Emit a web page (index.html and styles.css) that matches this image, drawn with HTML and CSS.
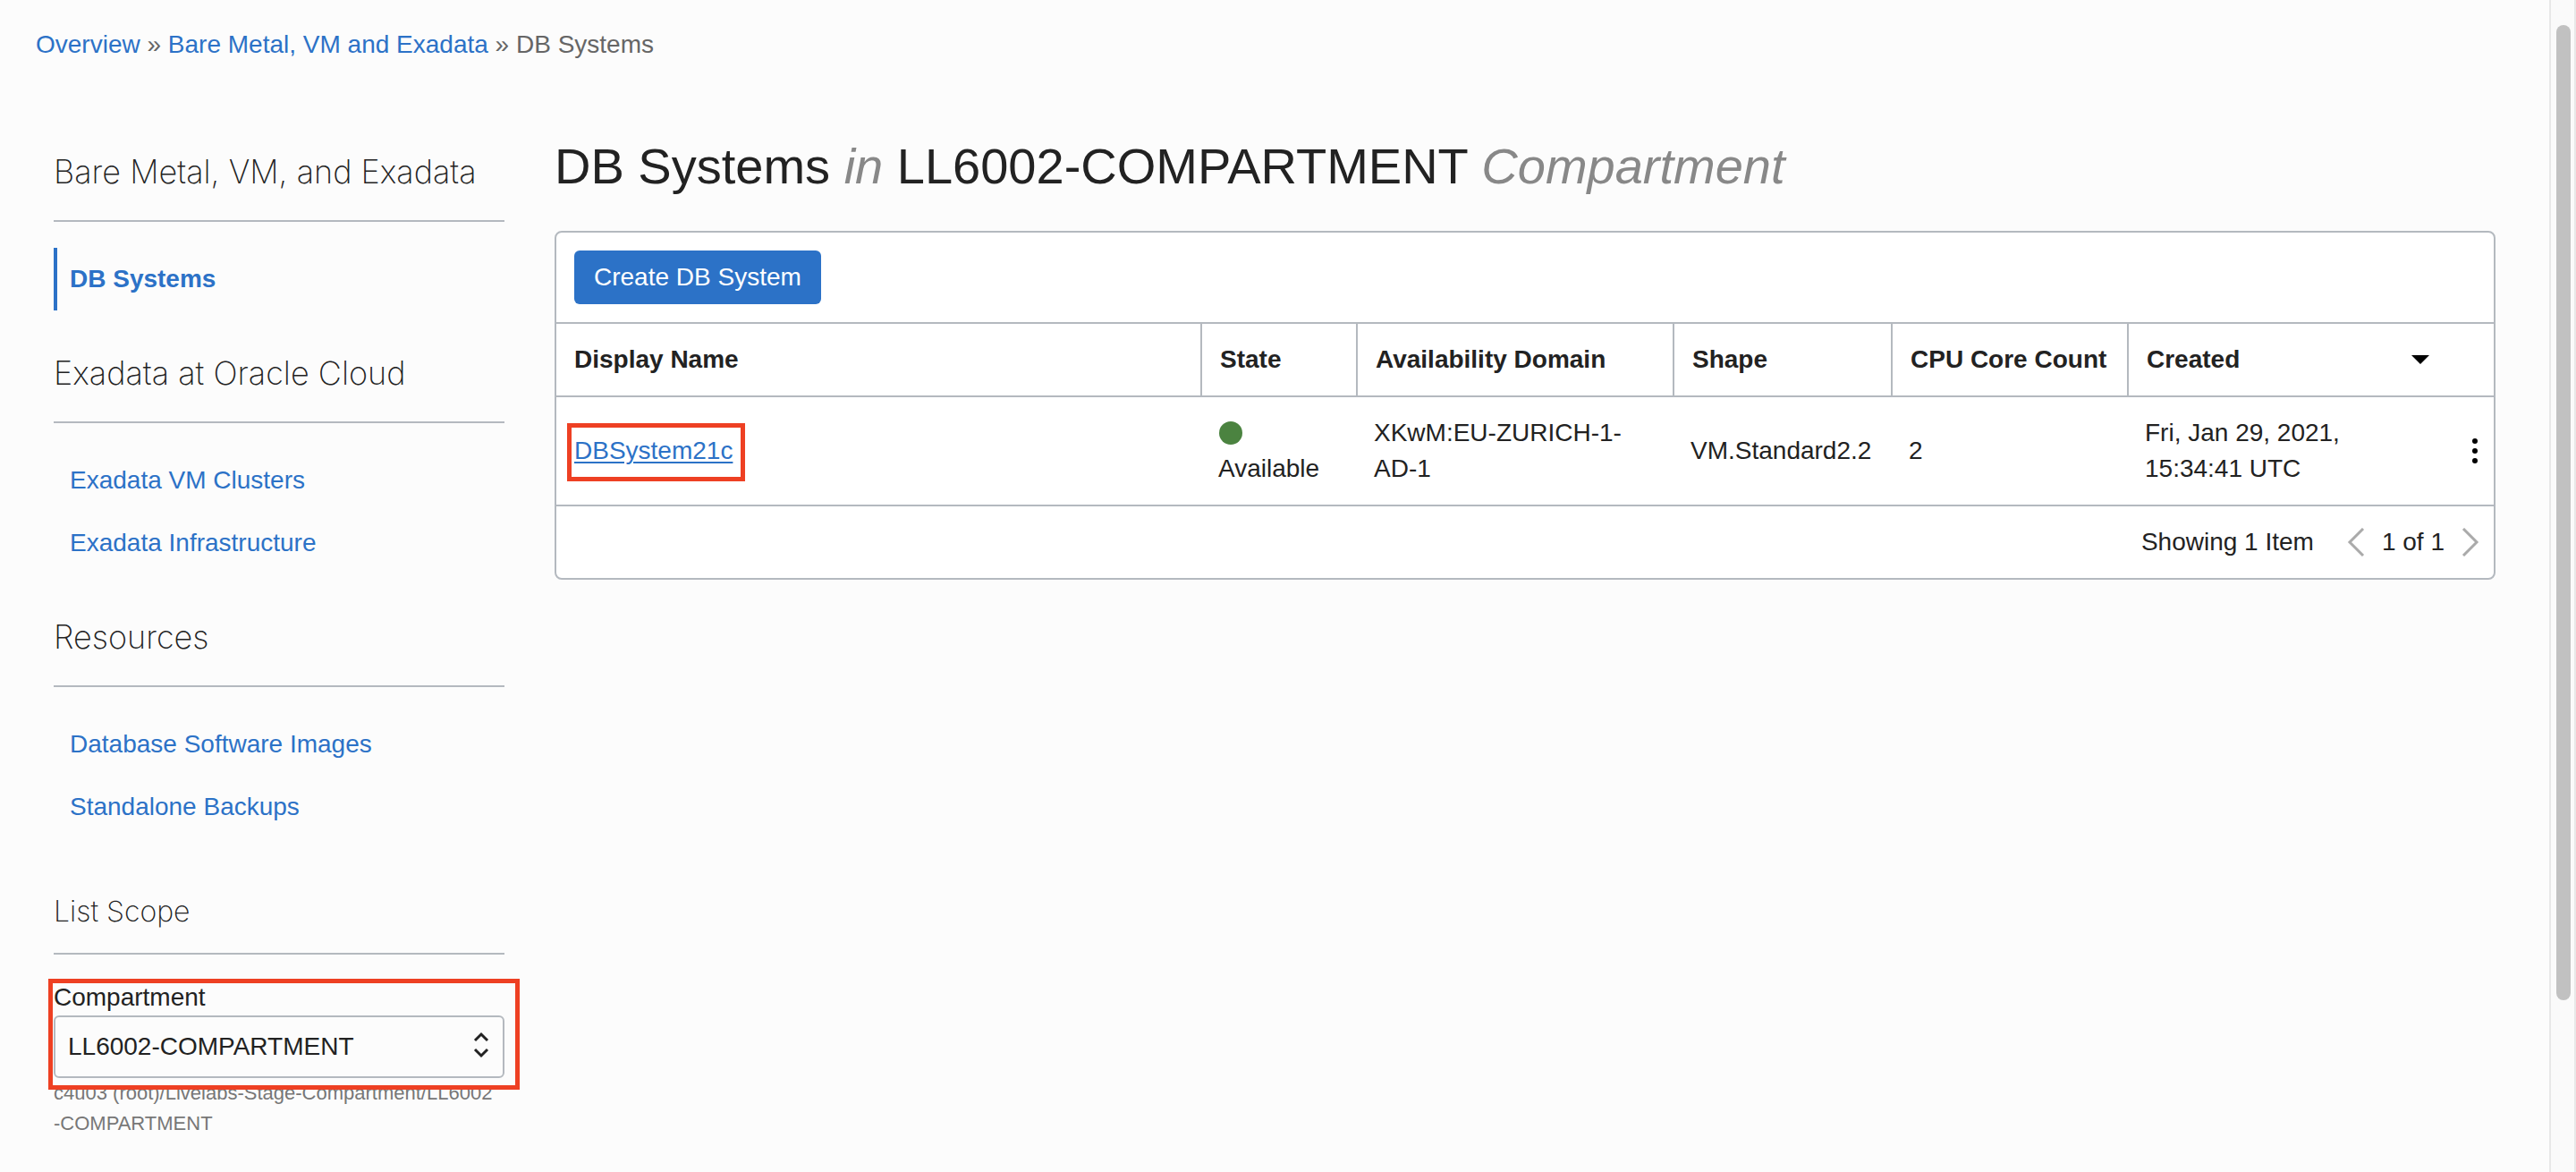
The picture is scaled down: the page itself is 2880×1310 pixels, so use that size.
FILE: index.html
```html
<!DOCTYPE html>
<html lang="en">
<head>
  <meta charset="utf-8">
  <meta name="viewport" content="width=device-width, initial-scale=1">
  <title>DB Systems</title>
  <link rel="stylesheet" href="styles.css">
</head>
<body>
  <div class="shell">
    <div class="page">
      <nav class="breadcrumb" aria-label="Breadcrumb">
        <a class="link" href="#">Overview</a> »
        <a class="link" href="#">Bare Metal, VM and Exadata</a> »
        <span>DB Systems</span>
      </nav>

      <div class="layout">
        <aside class="sidebar">
          <h2 class="section-title">Bare Metal, VM, and Exadata</h2>
          <ul class="nav-list">
            <li><a class="nav-link nav-link-active" href="#">DB Systems</a></li>
          </ul>
          <h2 class="section-title">Exadata at Oracle Cloud</h2>
          <ul class="nav-list">
            <li><a class="nav-link" href="#">Exadata VM Clusters</a></li>
            <li><a class="nav-link" href="#">Exadata Infrastructure</a></li>
          </ul>
          <h2 class="section-title">Resources</h2>
          <ul class="nav-list">
            <li><a class="nav-link" href="#">Database Software Images</a></li>
            <li><a class="nav-link" href="#">Standalone Backups</a></li>
          </ul>

          <section class="scope">
            <h3 class="scope-title">List Scope</h3>
            <div class="field callout callout-field">
              <label class="field-label" for="compartment">Compartment</label>
              <div class="select-wrap">
                <select class="select" id="compartment">
                  <option>LL6002-COMPARTMENT</option>
                </select>
                <svg class="select-icon" viewBox="0 0 18 30" aria-hidden="true">
                  <path d="M2 10 9 3l7 7M2 20l7 7 7-7"/>
                </svg>
              </div>
            </div>
            <p class="hint">c4u03 (root)/Livelabs-Stage-Compartment/LL6002<br>-COMPARTMENT</p>
          </section>
        </aside>

        <main class="content">
          <h1 class="title">DB Systems <em>in</em> LL6002-COMPARTMENT <em>Compartment</em></h1>
          <div class="panel">
            <div class="toolbar">
              <button class="button" type="button">Create DB System</button>
            </div>
            <table class="table">
              <colgroup>
                <col>
                <col class="col-state">
                <col class="col-domain">
                <col class="col-shape">
                <col class="col-cpu">
                <col class="col-created">
                <col class="col-actions">
              </colgroup>
              <thead>
                <tr>
                  <th scope="col">Display Name</th>
                  <th scope="col">State</th>
                  <th scope="col">Availability Domain</th>
                  <th scope="col">Shape</th>
                  <th scope="col">CPU Core Count</th>
                  <th class="created-head" scope="col" aria-sort="descending">
                    <div class="sort">Created
                      <svg class="sort-icon" viewBox="0 0 20 10" aria-hidden="true"><path d="M0 0h20L10 10z"/></svg>
                    </div>
                  </th>
                  <td class="actions"></td>
                </tr>
              </thead>
              <tbody>
                <tr>
                  <td><span class="callout callout-link"><a class="row-link" href="#">DBSystem21c</a></span></td>
                  <td><span class="status-dot"></span>Available</td>
                  <td>XKwM:EU-ZURICH-1-AD-1</td>
                  <td>VM.Standard2.2</td>
                  <td>2</td>
                  <td>Fri, Jan 29, 2021, 15:34:41 UTC</td>
                  <td class="actions">
                    <button class="icon-button" type="button" aria-label="Actions">
                      <svg class="dots-icon" viewBox="0 0 18 28" aria-hidden="true">
                        <circle cx="9" cy="3" r="3"/><circle cx="9" cy="14" r="3"/><circle cx="9" cy="25" r="3"/>
                      </svg>
                    </button>
                  </td>
                </tr>
              </tbody>
            </table>
            <div class="pager">
              <span class="pager-count">Showing 1 Item</span>
              <button class="icon-button" type="button" aria-label="Previous page">
                <svg class="chevron" viewBox="0 0 20 32" aria-hidden="true"><path d="M18 1 3 16l15 15"/></svg>
              </button>
              <span>1 of 1</span>
              <button class="icon-button" type="button" aria-label="Next page">
                <svg class="chevron" viewBox="0 0 20 32" aria-hidden="true"><path d="m2 1 15 15L2 31"/></svg>
              </button>
            </div>
          </div>
        </main>
      </div>
    </div>
    <div class="scroll-track" aria-hidden="true"><div class="scroll-thumb"></div></div>
  </div>
</body>
</html>
```
FILE: styles.css
```css
* {
  box-sizing: border-box;
}

body {
  margin: 0;
  background: #fcfcfc;
  color: #222;
  font-family: "Liberation Sans", Arial, sans-serif;
  font-size: 28px;
  line-height: 40px;
}

h1,
h2,
h3,
p,
ul {
  margin: 0;
  padding: 0;
}

ul {
  list-style: none;
}

button,
select {
  font: inherit;
  color: inherit;
}

.shell {
  display: flex;
  min-height: 100vh;
}

.page {
  flex: 1;
  min-width: 0;
  padding: 30px 60px 0 40px;
}

/* Breadcrumb */

.breadcrumb {
  color: #666;
}

.link {
  color: #2c72c7;
  text-decoration: none;
}

/* Page columns */

.layout {
  display: flex;
  gap: 56px;
  margin-top: 84px;
  padding-left: 20px;
}

.sidebar {
  flex: none;
  width: 504px;
  padding-top: 16px;
}

.content {
  flex: 1;
  min-width: 0;
}

/* Sidebar */

.section-title {
  padding-bottom: 32px;
  border-bottom: 2px solid #b4b9bf;
  font-family: Inter, "Liberation Sans", sans-serif;
  font-size: 36px;
  font-weight: 200;
  line-height: 44px;
}

.nav-list {
  padding: 29px 0 48px;
}

.nav-link {
  display: block;
  padding: 15px 14px;
  border-left: 4px solid transparent;
  color: #2c72c7;
  text-decoration: none;
}

.nav-link-active {
  border-left-color: #2c72c7;
  font-weight: bold;
}

.scope {
  padding-top: 14px;
}

.scope-title {
  margin-bottom: 32px;
  padding-bottom: 26px;
  border-bottom: 2px solid #b4b9bf;
  font-family: Inter, "Liberation Sans", sans-serif;
  font-size: 32px;
  font-weight: 200;
  line-height: 40px;
}

.field-label {
  display: block;
  padding-bottom: 4px;
  line-height: 32px;
}

.select-wrap {
  position: relative;
}

.select {
  display: block;
  width: 100%;
  height: 70px;
  padding: 0 56px 0 14px;
  border: 2px solid #b4b9bf;
  border-radius: 6px;
  background: #fcfcfc;
  appearance: none;
}

.select-icon {
  position: absolute;
  top: 18px;
  right: 17px;
  width: 18px;
  height: 30px;
  fill: none;
  stroke: #222;
  stroke-width: 3;
  pointer-events: none;
}

.hint {
  color: #777;
  font-size: 22px;
  line-height: 34px;
}

/* Red frames drawn round the highlighted items */

.callout {
  position: relative;
}

.callout::after {
  content: "";
  position: absolute;
  border: 5px solid #ee4023;
  pointer-events: none;
}

.callout-field::after {
  inset: -5px -17px -13px -6px;
}

.callout-link {
  display: inline-block;
}

.callout-link::after {
  inset: -11px -14px -14px -8px;
}

/* Main panel */

.title {
  margin-bottom: 40px;
  font-size: 56px;
  font-weight: normal;
  line-height: 64px;
}

.title em {
  color: #888;
}

.panel {
  border: 2px solid #b4b9bf;
  border-radius: 8px;
  background: #fff;
}

.toolbar {
  padding: 20px;
}

.button {
  display: block;
  padding: 10px 22px;
  border: 0;
  border-radius: 6px;
  background: #2c72c7;
  color: #fff;
}

.table {
  width: 100%;
  table-layout: fixed;
  border-spacing: 0;
}

.col-state {
  width: 174px;
}

.col-domain {
  width: 354px;
}

.col-shape {
  width: 244px;
}

.col-cpu {
  width: 264px;
}

.col-created {
  width: 350px;
}

.col-actions {
  width: 60px;
}

.table th,
.table td {
  padding: 20px;
  border-bottom: 2px solid #b4b9bf;
  text-align: left;
}

.table th,
.table thead td {
  border-top: 2px solid #b4b9bf;
}

.table th {
  white-space: nowrap;
}

.table th + th {
  border-left: 2px solid #b4b9bf;
}

.table .created-head {
  padding-right: 12px;
}

.table .actions {
  padding: 0 12px 0 0;
}

.actions .icon-button {
  margin-left: auto;
}

.sort {
  display: flex;
  align-items: center;
  justify-content: space-between;
}

.sort-icon {
  width: 20px;
  height: 10px;
  fill: #000;
}

.row-link {
  color: #2c72c7;
  text-decoration-thickness: 2px;
  text-underline-offset: 3px;
}

.status-dot {
  display: block;
  width: 26px;
  height: 26px;
  margin: 7px 1px;
  border-radius: 50%;
  background: #4b8340;
}

.icon-button {
  display: block;
  padding: 0;
  border: 0;
  background: none;
}

.dots-icon {
  display: block;
  width: 18px;
  height: 28px;
  fill: #000;
}

.pager {
  display: flex;
  align-items: center;
  justify-content: flex-end;
  gap: 19px;
  padding: 20px 16px;
}

.pager-count {
  margin-right: 18px;
}

.chevron {
  display: block;
  width: 20px;
  height: 32px;
  fill: none;
  stroke: #aaa;
  stroke-width: 3;
}

/* Scroll bar */

.scroll-track {
  flex: none;
  width: 30px;
  padding: 28px 4px 0 6px;
  border: solid #e8e8e8;
  border-width: 0 2px;
  background: #fafafa;
}

.scroll-thumb {
  height: 85%;
  border-radius: 8px;
  background: #c1c1c1;
}
```
